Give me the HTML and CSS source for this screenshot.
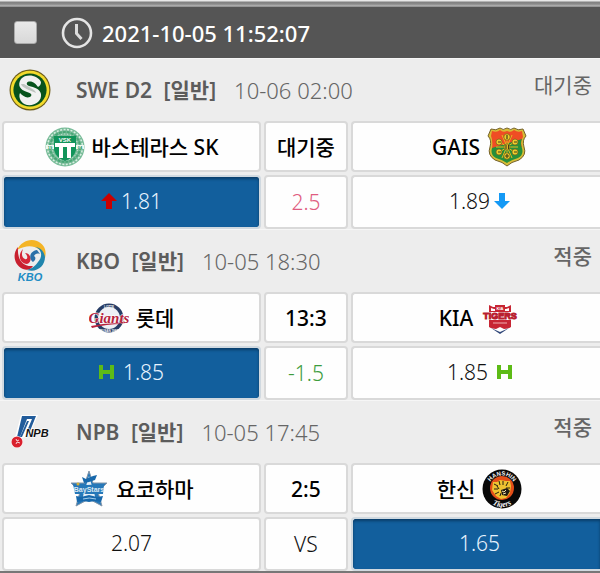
FILE: index.html
```html
<!DOCTYPE html>
<html lang="ko">
<head>
    <meta charset="UTF-8">
    <meta name="viewport" content="width=device-width, initial-scale=1.0">
    <title>배팅내역</title>
    <link rel="stylesheet" href="styles.css">
</head>
<body>
    <div class="bet-slip">
        <header class="slip-header">
            <input type="checkbox" id="slip-check" class="slip-check">
            <label for="slip-check" class="slip-label">
                <svg class="clock" viewBox="0 0 32 32" aria-hidden="true">
                    <circle cx="16" cy="16" r="14" fill="none" stroke="#e4e4e4" stroke-width="2.6"/>
                    <path d="M15.5 7v9.5l5 5.5" fill="none" stroke="#dcdcdc" stroke-width="3"/>
                </svg>
                <time>2021-10-05 11:52:07</time>
            </label>
        </header>

        <section class="match">
            <div class="league">
                <svg class="league-logo" viewBox="0 0 42 42" aria-hidden="true">
                    <circle cx="21" cy="21" r="20.5" fill="#6b5c1b"/>
                    <circle cx="21" cy="21" r="19.3" fill="#f2da2c"/>
                    <circle cx="21" cy="21" r="16.6" fill="#07521c"/>
                    <path d="M32 13C29 6 17 4 12 10C8 16 11 21 18 23C22 24 24 26 21 28C17 29.500 14 27 11 24C9 28 12 35 18 36C26 37 33 32 32 25C31 20 25 18 20 17C17 16 17 13 20 12.500C24 12 27 15 29 18C31 17 32 15 32 13Z" fill="#f1f1f1"/>
                    <path d="M12 15C13 19 21 21 27 24C26 20 19 18 15 15Z" fill="#bfc5c0"/>
                </svg>
                <h2>SWE D2 <span class="kind">[일반]</span></h2>
                <time>10-06 02:00</time>
                <span class="status">대기중</span>
            </div>
            <div class="board">
                <div class="cell team">
                    <svg class="team-logo" viewBox="0 0 40 40" aria-hidden="true">
                        <circle cx="20" cy="20" r="19.500" fill="#79bc99"/>
                        <circle cx="20" cy="20" r="17.500" fill="none" stroke="#d8eee1" stroke-width="1.500" stroke-dasharray="2 1.500"/>
                        <circle cx="20" cy="20" r="15" fill="none" stroke="#4aa777" stroke-width="2" stroke-dasharray="3 1"/>
                        <circle cx="20" cy="20" r="13" fill="none" stroke="#d8eee1" stroke-dasharray="1 2"/>
                        <path d="M9 9h22v14q-2 8-11 11q-9-3-11-11z" fill="#11945a"/>
                        <path d="M10 16h20v4h-4v11h-4V20h-4v11h-4V20h-4z" fill="#fff"/>
                        <path d="M1 18h8v4H1zM31 18h8v4h-8z" fill="#eef8f2"/>
                        <text x="20" y="15" class="vsk-text">VSK</text>
                        <text x="5" y="22" class="vsk-year">19</text>
                        <text x="35" y="22" class="vsk-year">04</text>
                    </svg>
                    <span>바스테라스 SK</span>
                </div>
                <div class="cell score">대기중</div>
                <div class="cell team">
                    <span>GAIS</span>
                    <svg class="team-logo" viewBox="0 0 40 40" aria-hidden="true">
                        <path d="M4 2Q9 4 13 1Q16 4 20 1Q24 4 27 1Q31 4 36 2L39 9Q35 13 37 20Q40 28 32 33Q24 35 20 39Q16 35 8 33Q0 28 3 20Q5 13 1 9Z" fill="#d7bd35" stroke="#74612b"/>
                        <path d="M5 4Q10 6 13 3Q16 6 20 4Q24 6 27 3Q31 6 35 4L36 10Q33 14 35 20L5 22Q6 13 4 9Z" fill="#ef4d24"/>
                        <path d="M35 12Q33 16 35 21Q37 28 31 31Q24 33 20 36Q16 33 9 31Q3 28 5 21Z" fill="#268f3a"/>
                        <path d="M20 8v22M10 13l20 14M10 27l20-14M15 8l10 23M25 8L15 31M9 20h22" stroke="#e5bd22" stroke-width="1"/>
                        <g fill="#edcb2b" stroke="#75601a" stroke-width=".7">
                            <circle cx="20" cy="10" r="3.200"/><circle cx="12" cy="15" r="3"/><circle cx="28" cy="15" r="3"/>
                            <circle cx="12" cy="25" r="3"/><circle cx="28" cy="25" r="3"/><circle cx="20" cy="29" r="3.200"/><circle cx="20" cy="20" r="3"/>
                        </g>
                        <path d="M19 18v4M21.500 18v4M11 15h3M27 15h3M11 25h3M27 25h3M20 8v4M18 29h4M20 27v4" stroke="#43401a" stroke-width="1.200"/>
                    </svg>
                </div>
                <button type="button" class="cell odds picked">
                    <svg class="arrow up" viewBox="0 0 16 16" aria-hidden="true"><path d="M8 0l8 8h-5v8H5V8H0z"/></svg>
                    <span>1.81</span>
                </button>
                <div class="cell line over">2.5</div>
                <button type="button" class="cell odds">
                    <span>1.89</span>
                    <svg class="arrow down" viewBox="0 0 16 16" aria-hidden="true"><path d="M8 16L0 8h5V0h6v8h5z"/></svg>
                </button>
            </div>
        </section>

        <section class="match">
            <div class="league">
                <svg class="league-logo" viewBox="0 0 42 42" aria-hidden="true">
                    <path d="M8 10C12 2 20-2 28 1C35 4 38 10 36 18C33 8 22 2 8 10Z" fill="#f4b426"/>
                    <path d="M9 7C3 14 5 25 14 29C19 31 22 29 24 26C14 27 8 20 9 7Z" fill="#c8202f"/>
                    <path d="M14 9C8 15 11 24 18 24C24 22 22 13 16 13C20 17 18 20 16 19C13 18 12 14 14 9Z" fill="#d52637"/>
                    <path d="M26 7C33 9 34 17 29 22C26 26 24 28 18 30C28 33 36 26 36 17C35 11 31 7 26 7Z" fill="#2085ad"/>
                    <path d="M28 10C21 11 19 18 24 22C27 20 27 17 25 16C26 14 28 13 31 14Z" fill="#2b70a8"/>
                    <text x="21" y="41" class="kbo-text">KBO</text>
                </svg>
                <h2>KBO <span class="kind">[일반]</span></h2>
                <time>10-05 18:30</time>
                <span class="status hit">적중</span>
            </div>
            <div class="board">
                <div class="cell team">
                    <svg class="team-logo" viewBox="0 0 40 40" aria-hidden="true">
                        <circle cx="20" cy="20" r="14.500" fill="#263c65"/>
                        <circle cx="20" cy="20" r="11" fill="#eef0f5"/>
                        <text x="20" y="9.500" class="giants-small">LOTTE</text>
                        <text x="20" y="34" class="giants-small">BUSAN 1982</text>
                        <text x="20" y="25" class="giants-text">Giants</text>
                        <path d="M2 28q18-4 35-2q-18-.5-34 4z" fill="#b7223d"/>
                    </svg>
                    <span>롯데</span>
                </div>
                <div class="cell score">13:3</div>
                <div class="cell team">
                    <span>KIA</span>
                    <svg class="team-logo" viewBox="0 0 40 40" aria-hidden="true">
                        <path d="M9 7l4 2h14l4-2v22l-11 6-11-6z" fill="#c72634"/>
                        <path d="M11 10l3 1h12l3-1v3H11z" fill="#fff"/>
                        <path d="M15 7h10v6H15z" fill="#c72634"/>
                        <path d="M1 14h38v8H1z" fill="#fff"/>
                        <text x="20" y="21" class="tigers-text">TIGERS</text>
                        <text x="20" y="12" class="kia-text">KIA</text>
                        <path d="M13 25h14" stroke="#f0adb0"/>
                        <path d="M9 30l7 1 4-2 4 2 7-1-11 6z" fill="#fff"/>
                        <path d="M11 30l9 4 9-4-9 6z" fill="#304779"/>
                    </svg>
                </div>
                <button type="button" class="cell odds picked spaced">
                    <svg class="handicap" viewBox="0 0 15 14" aria-label="H"><path d="M2 0v14M13 0v14M2 7h11"/></svg>
                    <span>1.85</span>
                </button>
                <div class="cell line under">-1.5</div>
                <button type="button" class="cell odds spaced">
                    <span>1.85</span>
                    <svg class="handicap" viewBox="0 0 15 14" aria-label="H"><path d="M2 0v14M13 0v14M2 7h11"/></svg>
                </button>
            </div>
        </section>

        <section class="match">
            <div class="league">
                <svg class="league-logo" viewBox="0 0 42 42" aria-hidden="true">
                    <path d="M12 4h17L20 24l-9 4-5-2z" fill="#fff"/>
                    <path d="M13 5h14l-6 15h-3l5-12h-5l-7 18H8z" fill="#225c9b"/>
                    <path d="M18 10h2l-7 16h-2z" fill="#225c9b"/>
                    <circle cx="8" cy="31" r="6" fill="#fff"/>
                    <circle cx="8" cy="31" r="5.500" fill="#d9202d"/>
                    <path d="M7 28l1 2 2-1M7 33l1-2 3 1" fill="none" stroke="#fff" stroke-width=".8"/>
                    <text x="28" y="26" class="npb-text">NPB</text>
                </svg>
                <h2>NPB <span class="kind">[일반]</span></h2>
                <time>10-05 17:45</time>
                <span class="status hit">적중</span>
            </div>
            <div class="board">
                <div class="cell team">
                    <svg class="team-logo" viewBox="0 0 40 40" aria-hidden="true">
                        <path d="M20 2l4 12 14 0-9 9 4 14-13-7-13 7 4-14L2 14h14z" fill="#2678b9" stroke="#8496a9"/>
                        <path d="M20 7l3 10h9l-7 6 2 9-7-5-7 5 2-9-7-6h9z" fill="#e5eff7"/>
                        <path d="M13 8l4 2 7-3 4-1-2 5-6 2-5 1z" fill="#1768ab"/>
                        <path d="M4 15l14 1 17-1-1 10H6z" fill="#2678b9"/>
                        <text x="20" y="23" class="baystars-text">BayStars</text>
                        <path d="M7 27l5 1 8-2 8 2 6-1-2 6-6-1-6 1-6-1-6 1z" fill="#1768ab"/>
                        <path d="M14 30q6-2 13 0" fill="none" stroke="#a4ceed"/>
                        <circle cx="9" cy="15" r="1.500" fill="#d5ae36"/>
                    </svg>
                    <span>요코하마</span>
                </div>
                <div class="cell score">2:5</div>
                <div class="cell team">
                    <span>한신</span>
                    <svg class="team-logo" viewBox="0 0 40 40" aria-hidden="true">
                        <defs>
                            <path id="hanshin-top" d="M6.500 20a13.500 13.500 0 0 1 27 0"/>
                            <path id="hanshin-bottom" d="M2 20a18 18 0 0 0 36 0"/>
                        </defs>
                        <circle cx="20" cy="20" r="19.500" fill="#080808"/>
                        <circle cx="20" cy="19" r="12" fill="#e24d18"/>
                        <path d="M11 13l4 0 3-2 6 1 4 0 1 5-1 7-4 5-5 1-5-3-4-6z" fill="#eec331"/>
                        <path d="M12 15l4 2M12 20l4 0M13 25l4-2M17 12l1 4M21 12v4M26 13l-2 4M28 19l-4 0M18 27l1-3M15 17l2 3" stroke="#252111" stroke-width="1"/>
                        <path d="M19 21l6-2 3 3-3 5-5-1z" fill="#211b12"/>
                        <path d="M20 22l2 1 2-2M21 25l3-1" fill="none" stroke="#f5e6ae"/>
                        <text class="hanshin-text"><textPath href="#hanshin-top" startOffset="50%">HANSHIN</textPath></text>
                        <text class="hanshin-sub"><textPath href="#hanshin-bottom" startOffset="50%">Tigers</textPath></text>
                    </svg>
                </div>
                <button type="button" class="cell odds">2.07</button>
                <div class="cell line">VS</div>
                <button type="button" class="cell odds picked">1.65</button>
            </div>
        </section>
    </div>
</body>
</html>
```
FILE: styles.css
```css
* {
    box-sizing: border-box;
}
body {
    margin: 0;
    background: #ededed;
    font-family: "Noto Sans", "Noto Sans CJK KR", sans-serif;
    font-size: 21px;
    line-height: 28px;
    color: #111;
}
.bet-slip {
    border-bottom: 2px solid #777;
}
.bet-slip::before {
    content: "";
    display: block;
    height: 7px;
    background: linear-gradient(#e8e8e8 1px, #808080 2px, #8a8a8a 4px, #b4b4b4 6px, #777);
}
.slip-header {
    display: flex;
    align-items: center;
    gap: 24px;
    height: 51px;
    padding: 0 14px;
    background: #555;
    color: #fff;
}
.slip-check {
    appearance: none;
    width: 23px;
    height: 23px;
    margin: 0;
    border: 1px solid #aaa;
    border-radius: 3px;
    background: linear-gradient(#e9e9e9, #d8d8d8);
}
.slip-check:checked {
    background: #125f9d;
}
.slip-label {
    display: flex;
    align-items: center;
    gap: 9px;
    font-size: 22px;
    font-weight: 500;
}
.clock {
    width: 32px;
    height: 32px;
}
.league {
    display: flex;
    align-items: center;
    height: 63px;
    padding: 0 8px 0 9px;
    border-top: 1px solid #f6f6f6;
    color: #666;
}
.league-logo {
    flex: none;
    width: 42px;
    height: 42px;
    margin-right: 25px;
}
.league h2 {
    margin: 0 18px 0 0;
    font-size: 21px;
    font-weight: 600;
    color: #5c5c5c;
}
.kind {
    margin-left: 6px;
}
.league time {
    font-size: 22px;
    font-weight: 300;
}
.status {
    align-self: flex-start;
    margin-left: auto;
    padding-top: 12px;
    font-weight: 400;
}
.status.hit {
    font-weight: 500;
}
.board {
    display: grid;
    grid-template-columns: 26fr 84px 25fr;
    grid-template-rows: 51px 54px;
    gap: 3px;
    padding-left: 2px;
}
.cell {
    display: flex;
    align-items: center;
    justify-content: center;
    padding: 0;
    border: 2px solid #d9d9d9;
    border-radius: 4px;
    background: #fefefe;
    color: #111;
    font: inherit;
}
.cell:nth-child(3n) {
    padding-left: 6px;
    border-right: 0;
    border-radius: 4px 0 0 4px;
}
.team,
.score {
    font-weight: 500;
    color: #000;
}
.team {
    gap: 7px;
}
.team-logo {
    flex: none;
    width: 40px;
    height: 40px;
}
.odds {
    gap: 4px;
    padding-bottom: 3px;
    font-weight: 300;
    cursor: pointer;
}
.odds.spaced {
    gap: 9px;
}
.odds.picked {
    border-color: #d0d9e0;
    background: #125f9d;
    background-clip: padding-box;
    box-shadow: inset 0 2px 3px #0a3d68;
    color: #e8f4ff;
}
.line {
    font-weight: 300;
}
.line.over {
    color: #e05c80;
}
.line.under {
    color: #3d9c3d;
}
.arrow {
    width: 16px;
    height: 16px;
}
.arrow.up {
    fill: #c90000;
}
.arrow.down {
    fill: #1499f5;
}
.handicap {
    width: 15px;
    height: 14px;
    fill: none;
    stroke: #5dbb16;
    stroke-width: 4;
}

/* logo lettering */
.team-logo text,
.league-logo text {
    font-family: "Liberation Sans", sans-serif;
    font-weight: 700;
    text-anchor: middle;
}
.team-logo .vsk-text {
    font-size: 6px;
    fill: #fff;
}
.team-logo .vsk-year {
    font-size: 4px;
    fill: #11945a;
}
.league-logo .kbo-text {
    font-size: 11px;
    font-style: italic;
    fill: #208cc4;
}
.team-logo .giants-text {
    font-family: "Liberation Serif", serif;
    font-size: 15px;
    font-style: italic;
    fill: #b7223d;
    stroke: #fff;
    stroke-width: 1px;
    paint-order: stroke;
}
.team-logo .giants-small {
    font-size: 3px;
    fill: #fff;
}
.team-logo .tigers-text {
    font-size: 9px;
    fill: #b9202f;
    stroke: #b9202f;
    stroke-width: 1px;
    paint-order: stroke;
}
.team-logo .kia-text {
    font-size: 4px;
    fill: #fff;
}
.league-logo .npb-text {
    font-size: 11px;
    font-style: italic;
    fill: #111;
    stroke: #fff;
    stroke-width: 1px;
    paint-order: stroke;
}
.team-logo .baystars-text {
    font-size: 7px;
    fill: #d9e8f3;
}
.team-logo .hanshin-text {
    font-size: 6px;
    fill: #f2f2f2;
}
.team-logo .hanshin-sub {
    font-family: "Liberation Serif", serif;
    font-size: 8px;
    font-style: italic;
    fill: #f2f2f2;
}
```
